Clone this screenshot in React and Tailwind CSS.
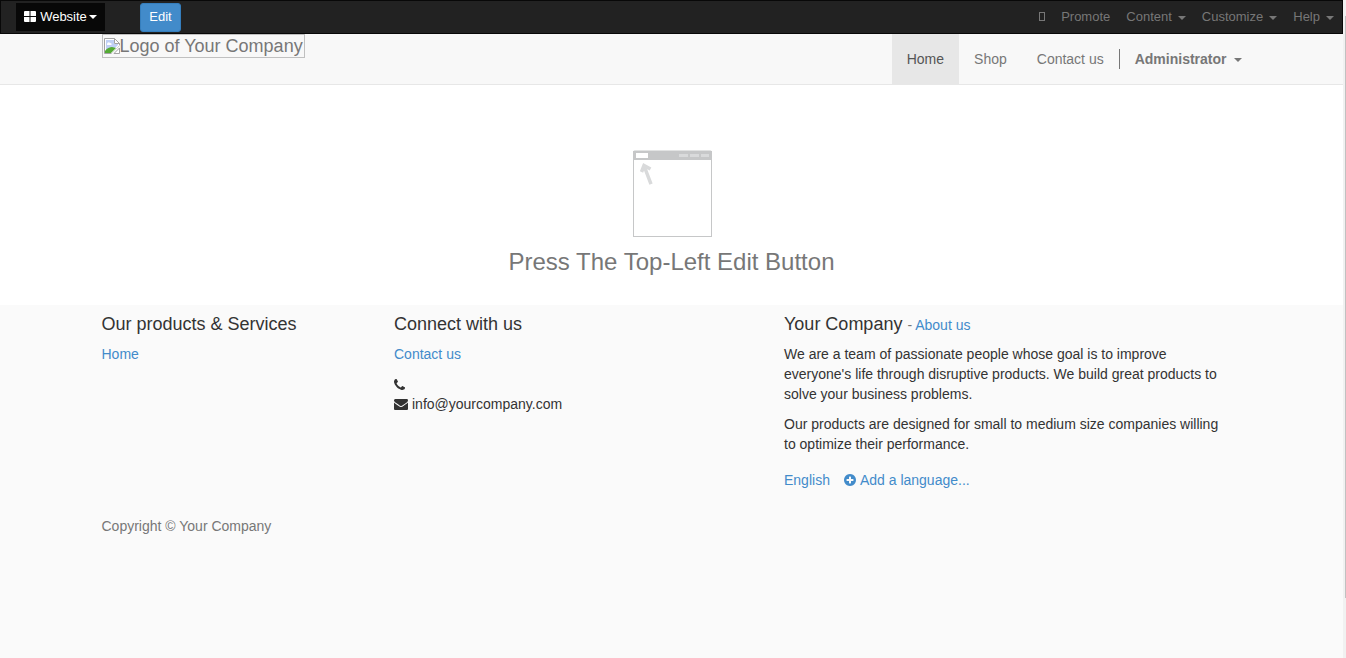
import clsx from "clsx"

const menus = ["Content", "Customize", "Help"]

const Caret = ({ className }) => (
  <span
    className={clsx(
      "inline-block align-middle border-x-4 border-t-4 border-x-transparent border-t-current",
      className
    )}
  />
)

const BrokenImage = () => (
  <svg className="w-4 h-4 shrink-0" viewBox="0 0 16 16">
    <path d="M.5.5h10l5 5v2L8 15.500H.5z" fill="#fff" stroke="#a3a3a3" />
    <path d="M2 2h8v4h4v1l-7 7H2z" fill="#c0d0f5" />
    <path d="M3 6.500c0-2 2-3 3-1.500 2 0 2 2 1 2H3z" fill="#fff" />
    <path d="M1 15v-2c2-3 5-4 7-4l4 1-5 5z" fill="#54ab35" />
    <path d="M10.500.5v5h5z" fill="#fff" stroke="#a3a3a3" />
    <path d="M16 7v2l-7 7H7z" fill="#f8f8f8" />
    <path d="M15.500 10v5.500H10z" fill="#fff" stroke="#a3a3a3" />
  </svg>
)

const PhoneIcon = () => (
  <svg className="w-[11px] h-[11px]" viewBox="0 0 1408 1408" fill="currentColor">
    <path d="M1408 1112q0 27-10 70.5t-21 68.500q-21 50-122 106-94 51-186 51-27 0-53-3.500t-57.500-12.500-47-14.500-55.500-20.500-49-18q-98-35-175-83-127-79-264-216t-216-264q-48-77-83-175-3-9-18-49t-20.500-55.500-14.500-47-12.500-57.500-3.500-53q0-92 51-186 56-101 106-122 25-11 68.500-21t70.500-10q14 0 21 3 18 6 53 76 11 19 30 54t35 63.500 31 53.500q3 4 17.500 25t21.500 35.500 7 28.500q0 20-28.500 50t-62 55-62 53-28.500 46q0 9 5 22.500t8.500 20.500 14 24 11.500 19q76 137 174 235t235 174q2 1 19 11.500t24 14 20.500 8.500 22.500 5q18 0 46-28.500t53-62 55-62 50-28.500q14 0 28.500 7t35.500 21.500 25 17.500q25 15 53.500 31t63.500 35 54 30q70 35 76 53 3 7 3 21z" />
  </svg>
)

const EnvelopeIcon = () => (
  <svg className="w-[14px] h-[11px]" viewBox="0 0 1792 1408" fill="currentColor">
    <path d="M1792 454v794q0 66-47 113t-113 47h-1472q-66 0-113-47t-47-113v-794q44 49 101 87 362 246 497 345 57 42 92.500 65.500t94.500 48 110 24.500h2q51 0 110-24.500t94.500-48 92.500-65.500q170-123 498-345 57-39 100-87zm0-294q0 79-49 151t-122 123q-376 261-468 325-10 7-42.500 31t-54 38.500-52 32.500-57.500 27-50 9h-2q-23 0-50-9t-57.500-27-52-32.500-54-38.500-42.500-31q-91-64-262-182.500t-205-142.500q-62-42-117-115.500t-55-136.500q0-78 41.500-130t118.500-52h1472q65 0 112.500 47t47.500 113z" />
  </svg>
)

const PlusCircleIcon = () => (
  <svg className="w-3 h-3" viewBox="0 0 1536 1536" fill="currentColor">
    <path d="M1216 832v-128q0-26-19-45t-45-19h-256v-256q0-26-19-45t-45-19h-128q-26 0-45 19t-19 45v256h-256q-26 0-45 19t-19 45v128q0 26 19 45t45 19h256v256q0 26 19 45t45 19h128q26 0 45-19t19-45v-256h256q26 0 45-19t19-45zm320-64q0 209-103 385.500t-279.500 279.500-385.500 103-385.500-103-279.500-279.500-103-385.500 103-385.500 279.500-279.500 385.500-103 385.500 103 279.500 279.500 103 385.500z" />
  </svg>
)

const WindowDrawing = () => (
  <svg className="w-20 h-[88px]" viewBox="0 0 80 88">
    <rect x="1.500" y="2.500" width="78" height="85" fill="#fff" stroke="#c6c7c8" />
    <path d="M1 3q0-1.500 1.500-1.500h76q1.500 0 1.500 1.500v8H1z" fill="#c6c7c8" />
    <rect x="4" y="4" width="12" height="5" fill="#fff" />
    <path d="M47 5h9v3h-9zM58 5h9v3h-9zM69 5h8v3h-8z" fill="#d9dadb" />
    <path d="M19 35L12.500 18M9.500 23L12 16.500L18.500 20" fill="none" stroke="#d9dadb" strokeWidth="3.500" />
  </svg>
)

const TopBar = () => (
  <div className="h-[34px] bg-[#222] border border-[#080808] flex items-center justify-between text-[13px] leading-5">
    <div className="flex items-center">
      <button className="ml-[15px] h-7 w-[89px] bg-[#080808] text-white flex items-center justify-center">
        <svg className="w-3 h-3 mr-1" viewBox="0 0 12 12" fill="currentColor">
          <path d="M1 0h4.500v5H0V1q0-1 1-1zM6.500 0H11q1 0 1 1v4H6.500zM0 6h5.500v5H1q-1 0-1-1zM6.500 6H12v4q0 1-1 1H6.500z" />
        </svg>
        Website
        <Caret className="ml-[2px]" />
      </button>
      <button className="ml-[35px] h-[29px] w-[41px] bg-[#428bca] border border-[#357ebd] rounded-[3px] text-white">
        Edit
      </button>
    </div>
    <div className="flex items-center gap-4 pr-2 text-[#777]">
      <button aria-label="Mobile preview" className="flex h-5 w-[6px] items-start pt-[5px]">
        <span className="h-[9px] w-[6px] border border-current" />
      </button>
      <a href="#promote">Promote</a>
      {menus.map((menu) => (
        <button key={menu}>
          {menu}
          <Caret className="ml-[6px]" />
        </button>
      ))}
    </div>
  </div>
)

const Header = () => (
  <header className="bg-[#f8f8f8] border-b border-[#e7e7e7]">
    <div className="max-w-[1170px] mx-auto pl-[15px] flex items-start justify-between">
      <a
        href="#home"
        className="h-6 border border-[#c0c0c0] flex items-center px-px text-lg leading-5 text-[#777]"
      >
        <BrokenImage />
        Logo of Your Company
      </a>
      <nav className="flex items-center leading-5 text-[#777]">
        <a href="#home" className="px-[15px] py-[15px] bg-[#e7e7e7] text-[#555]">Home</a>
        <a href="#shop" className="px-[15px] py-[15px]">Shop</a>
        <a href="#contact" className="px-[15px] py-[15px]">Contact us</a>
        <button className="px-[15px] border-l border-[#777] font-bold">
          Administrator
          <Caret className="ml-[7px]" />
        </button>
      </nav>
    </div>
  </header>
)

const Footer = () => (
  <footer className="flex-1 bg-[#fafafa] text-[#333] leading-5">
    <div className="max-w-[1170px] mx-auto px-[15px]">
      <div className="grid grid-cols-12 gap-x-[30px] pt-[9px]">
        <div className="col-span-3">
          <h4 className="h-5 text-lg leading-5 mb-[10px]">Our products &amp; Services</h4>
          <a href="#home" className="text-[#428bca]">Home</a>
        </div>
        <div className="col-span-4">
          <h4 className="h-5 text-lg leading-5 mb-[10px]">Connect with us</h4>
          <a href="#contact" className="text-[#428bca]">Contact us</a>
          <ul className="mt-[10px]">
            <li className="h-5 flex items-center">
              <PhoneIcon />
            </li>
            <li className="flex items-center gap-1">
              <EnvelopeIcon />
              info@yourcompany.com
            </li>
          </ul>
        </div>
        <div className="col-span-5 pr-[10px]">
          <h4 className="h-5 text-lg leading-5 mb-[10px]">
            Your Company{" "}
            <small className="text-sm leading-5 text-[#777]">
              - <a href="#about" className="text-[#428bca]">About us</a>
            </small>
          </h4>
          <p className="mb-[10px]">
            We are a team of passionate people whose goal is to improve everyone's life through
            disruptive products. We build great products to solve your business problems.
          </p>
          <p>
            Our products are designed for small to medium size companies willing to optimize their
            performance.
          </p>
          <div className="mt-4 flex gap-[14px] text-[#428bca]">
            <a href="#english">English</a>
            <a href="#language" className="flex items-center gap-1">
              <PlusCircleIcon />
              Add a language...
            </a>
          </div>
        </div>
      </div>
      <p className="mt-[26px] text-[#777]">Copyright © Your Company</p>
    </div>
  </footer>
)

const App = () => {
  return (
    <div className="min-h-screen flex bg-white font-['Liberation_Sans',Arial,sans-serif] text-sm">
      <div className="flex-1 flex flex-col">
        <TopBar />
        <Header />
        <main className="pt-16 pb-[29px] flex flex-col items-center">
          <WindowDrawing />
          <h1 className="mt-[11px] text-2xl leading-7 text-[#777]">Press The Top-Left Edit Button</h1>
        </main>
        <Footer />
      </div>
      {/* Scrollbar */}
      <div className="w-[3px] bg-[#f1f1f1] pt-4 pl-[2px]">
        <div className="h-[582px] bg-[#c1c1c1]" />
      </div>
    </div>
  )
}

export default App
